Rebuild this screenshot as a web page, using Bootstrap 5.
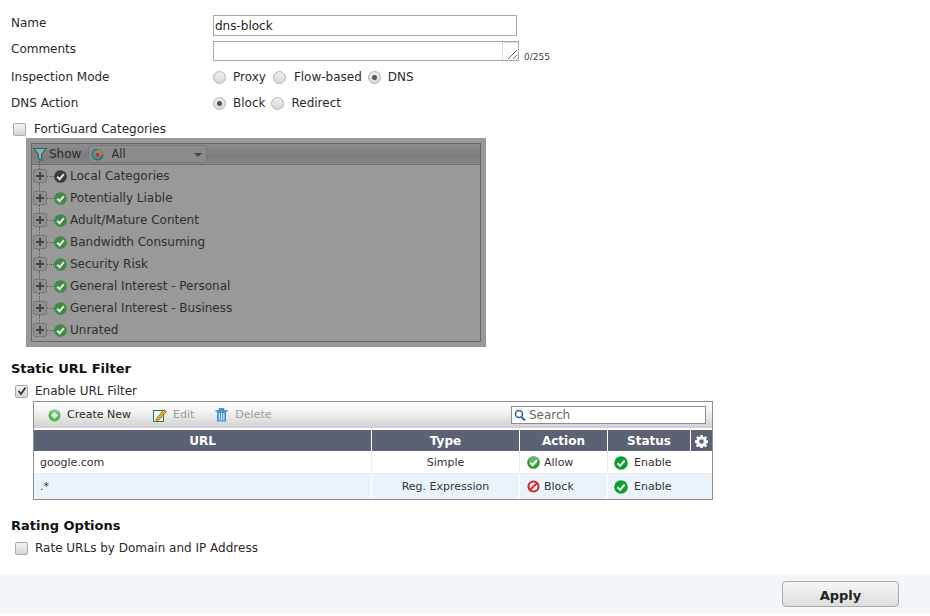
<!DOCTYPE html>
<html lang="en"><head><meta charset="utf-8"><title>DNS filter</title>
<link href="https://cdn.jsdelivr.net/npm/bootstrap@5.3.0/dist/css/bootstrap.min.css" rel="stylesheet">
<style>
html,body{height:616px;overflow:hidden}
body{font-family:"DejaVu Sans",sans-serif;font-size:12px;line-height:16px;color:#2a2a2a;background:#fff}
.pg{height:575px;padding:14px 0 0 11px}
.frow{display:flex;align-items:center}
.flabel{width:202px;flex:none}
.lift3{margin-top:-6px}
.lift2{margin-top:-4px}
.r1{height:23px}
.txt{width:304px;height:21px;border:1px solid #a8a8a8;padding:0 1px;font:inherit;font-size:12px;color:#222;display:block;outline:0}
.area-wrap{position:relative;width:306px;height:20px;border:1px solid #a8a8a8}
.grip{position:absolute;right:0;top:0;width:16px;height:18px;border-left:1px solid #ddd;border-top:1px solid #ddd}
.cnt{font-size:9px;margin-left:5px;color:#444;align-self:flex-end;line-height:12px}
.rad{width:13px;height:13px;border-radius:50%;border:1px solid #b4b4b4;background:linear-gradient(#eee,#d8d8d8);flex:none;display:flex;align-items:center;justify-content:center}
.rad.on::after{content:"";width:5px;height:5px;border-radius:50%;background:#555}
.ropt{margin:0 6px 0 7px}
.ropt.pr{margin-right:7px}
.ropt.fb{margin-left:8px}
.chk{width:11px;height:11px;border:1px solid #aaa;border-radius:2px;background:linear-gradient(#f4f4f4,#d6d6d6);flex:none;box-sizing:content-box;display:flex;align-items:center;justify-content:center}
.gpanel{margin:-4px 0 0 15px;width:460px;height:209px;background:#999;padding:5px}
.gbox{border:1px solid #666;height:199px}
.gbar{height:21px;border-bottom:1px solid #707070;background:linear-gradient(#8d8d8d,#7d7d7d 60%,#858585);display:flex;align-items:center;color:#2c2c2c}
.gfun{margin-left:1px;margin-right:2px}
.gsel{width:119px;height:18px;margin-left:6px;border:1px solid #7a7a7a;border-radius:3px;background:#8c8c8c;display:flex;align-items:center;padding:0 1px;position:relative;font-size:11.5px}
.gsel::after{content:"";position:absolute;right:4px;top:7px;border:4px solid transparent;border-top-color:#444;border-bottom:0}
.gall{margin-left:6px}
.trow{height:22px;display:flex;align-items:center;color:#2f2f2f;position:relative}
.trow::before{content:"";position:absolute;left:7px;top:-4px;height:8px;border-left:1px dotted #555}
.plus{width:14px;height:14px;margin:0 0 0 1px;border:1px solid #777;border-radius:2px;background:#909090;position:relative;flex:none}
.plus::before{content:"";position:absolute;left:2px;right:2px;top:5px;height:2px;background:#444}
.plus::after{content:"";position:absolute;top:2px;bottom:2px;left:5px;width:2px;background:#444}
.dash{width:7px;border-top:1px dotted #555;flex:none}
.trow svg{margin-right:3px;flex:none}
.h6t{font-weight:700;font-size:13px;color:#111;margin:0;line-height:16px}
.lnbox{margin-left:22px;width:680px;height:99px;border:1px solid #8f8f8f}
.lbar{height:26px;background:linear-gradient(#fff,#f2f2f2 40%,#cfcfcf);display:flex;align-items:center;padding-left:14px;font-size:11px;position:relative}
.lbtn{display:flex;align-items:center;gap:6px;margin-right:21px}
.lbtn.first{margin-right:22px}
.lbtn.del{gap:7px}
.dim{color:#9b9b9b}
.srch{position:absolute;left:477px;top:4px;width:195px;height:18px;background:#fff;border:1px solid #8d8d8d;display:flex;align-items:center;padding-left:2px;gap:3px;color:#666;font-size:12px}
.utable{width:678px;border-collapse:separate;border-spacing:0;table-layout:fixed;margin:2px 0 0!important;font-size:11px;--bs-table-bg:transparent}
.utable th{background:#5a6274;color:#fff;height:21px;padding:0;text-align:center;font-size:12px;font-weight:700;border-left:1px solid #fff;border-bottom:0;line-height:18px;vertical-align:middle}
.utable th:first-child{border-left:0}
.utable td{padding:1px 0 0 6px;height:23px;border-bottom:1px solid #eee;border-left:1px solid #eee;color:#333;vertical-align:middle}
.utable td:first-child{border-left:0}
.utable td:last-child{border-left:0}
.utable tr.alt td{background:#eaf3fb;height:25px;border-bottom:0;border-left-color:#fff;padding-top:0}
.utable tr.alt td:first-child,.utable tr.alt td:last-child{border-left:0}
.utable td.cen{text-align:center;padding-left:0}
.utable td.act{padding-left:7px}
.ic{display:inline-flex;align-items:center;gap:4px;vertical-align:middle}
.foot{height:38px;background:#f2f5fa;display:flex;justify-content:flex-end;align-items:center;padding-right:31px}
.apply{width:117px;height:26px;border:1px solid #aaa;border-radius:4px;background:linear-gradient(#f7f7f7,#dcdcdc);font-weight:700;font-size:13px;color:#222;padding:2px 0 0;line-height:24px}
</style></head><body>
<svg width="0" height="0" style="position:absolute"><defs>
<symbol id="ok" viewBox="0 0 14 14"><circle cx="7" cy="7" r="6.800" fill="currentColor"/><path d="M3.500 7.200 6.100 9.900 10.600 4.500" fill="none" stroke="#e4e8e4" stroke-width="2.200"/></symbol>
<symbol id="okg" viewBox="0 0 14 14"><circle cx="7" cy="7" r="6.800" fill="#2a9a33"/><circle cx="7" cy="5" r="5" fill="#8ccf8c" opacity=".55"/><path d="M3.500 7.200 6.100 9.900 10.600 4.500" fill="none" stroke="#fff" stroke-width="2.200"/></symbol>
</defs></svg>
<main class="pg">
 <div class="frow r1"><div class="flabel lift3">Name</div><input class="txt" value="dns-block"></div>
 <div class="frow" style="height:24px;margin-top:2px"><div class="flabel lift2">Comments</div><div class="area-wrap"><div class="grip"><svg width="15" height="17" viewBox="0 0 15 17"><path d="M5 16 14 7M10 16 14 12" stroke="#666" fill="none"/></svg></div></div><span class="cnt">0/255</span></div>
 <div class="frow" style="height:26px;margin-top:1px"><div class="flabel">Inspection Mode</div><span class="rad"></span><span class="ropt pr">Proxy</span><span class="rad"></span><span class="ropt fb">Flow-based</span><span class="rad on"></span><span class="ropt">DNS</span></div>
 <div class="frow" style="height:26px"><div class="flabel">DNS Action</div><span class="rad on"></span><span class="ropt">Block</span><span class="rad"></span><span class="ropt">Redirect</span></div>
 <div class="frow" style="height:26px;padding-left:2px"><span class="chk"></span><span style="margin-left:8px">FortiGuard Categories</span></div>
 <div class="gpanel"><div class="gbox">
  <div class="gbar"><svg class="gfun" width="14" height="15" viewBox="0 0 14 15"><path d="M.8 1.500H13L8.600 7.500V13.500L5.400 11.500V7.500Z" fill="#8fb0b0" stroke="#26666a" stroke-width="1.200"/></svg><span>Show</span>
   <div class="gsel" style="margin-left:7px"><svg width="15" height="15" viewBox="0 0 15 15"><path d="M7.500 2.500A5 5 0 0 0 3.500 10.500" fill="none" stroke="#2e8585" stroke-width="2"/><path d="M7.500 2.500A5 5 0 0 1 12.500 7.500" fill="none" stroke="#a87a2a" stroke-width="2"/><path d="M3.500 10.500A5 5 0 0 0 12.500 7.500" fill="none" stroke="#2a7a66" stroke-width="2"/><circle cx="7.500" cy="8" r="2.200" fill="#b03a3a"/></svg><span class="gall">All</span></div></div>
  <div class="trow"><i class="plus"></i><i class="dash"></i><svg width="13" height="13" style="color:#3c3c3c"><use href="#ok"/></svg><span>Local Categories</span></div>
  <div class="trow"><i class="plus"></i><i class="dash"></i><svg width="13" height="13" style="color:#3d8b45"><use href="#ok"/></svg><span>Potentially Liable</span></div>
  <div class="trow"><i class="plus"></i><i class="dash"></i><svg width="13" height="13" style="color:#3d8b45"><use href="#ok"/></svg><span>Adult/Mature Content</span></div>
  <div class="trow"><i class="plus"></i><i class="dash"></i><svg width="13" height="13" style="color:#3d8b45"><use href="#ok"/></svg><span>Bandwidth Consuming</span></div>
  <div class="trow"><i class="plus"></i><i class="dash"></i><svg width="13" height="13" style="color:#3d8b45"><use href="#ok"/></svg><span>Security Risk</span></div>
  <div class="trow"><i class="plus"></i><i class="dash"></i><svg width="13" height="13" style="color:#3d8b45"><use href="#ok"/></svg><span>General Interest - Personal</span></div>
  <div class="trow"><i class="plus"></i><i class="dash"></i><svg width="13" height="13" style="color:#3d8b45"><use href="#ok"/></svg><span>General Interest - Business</span></div>
  <div class="trow"><i class="plus"></i><i class="dash"></i><svg width="13" height="13" style="color:#3d8b45"><use href="#ok"/></svg><span>Unrated</span></div>
 </div></div>
 <h2 class="h6t" style="margin-top:14px">Static URL Filter</h2>
 <div class="frow" style="height:20px;margin-top:4px;padding-left:4px"><span class="chk"><svg width="10" height="10" viewBox="0 0 10 10"><path d="M1.500 5 4 8 8.500 1.500" fill="none" stroke="#333" stroke-width="1.800"/></svg></span><span style="margin-left:7px">Enable URL Filter</span></div>
 <div class="lnbox">
  <div class="lbar">
   <div class="lbtn first"><svg width="13" height="13" viewBox="0 0 13 13"><circle cx="6.500" cy="6.500" r="6" fill="#55b455"/><circle cx="6.500" cy="4.500" r="4" fill="#a5dca5" opacity=".5"/><path d="M6.500 3.500v6M3.500 6.500h6" stroke="#fff" stroke-width="2"/></svg>Create New</div>
   <div class="lbtn dim"><svg width="14" height="14" viewBox="0 0 14 14"><rect x=".5" y="2.500" width="10" height="11" fill="#f4fbf4" stroke="#1f7a66"/><path d="M3.500 10.500 11 1.500 13.500 3.500 6 12 3 12.500Z" fill="#e8a62c" stroke="#7a5a14" stroke-width=".7"/></svg>Edit</div>
   <div class="lbtn del dim"><svg width="13" height="14" viewBox="0 0 13 14"><path d="M.5 3h12M4.500 3V1h4v2" stroke="#2f78c0" fill="none" stroke-width="1.300"/><path d="M2 4h9v9.500H2z" fill="#3f8fd6"/><path d="M4.200 5v7.500M6.500 5v7.500M8.800 5v7.500" stroke="#e6f1fb" stroke-width="1.100"/></svg>Delete</div>
   <div class="srch"><svg width="12" height="13" viewBox="0 0 12 13"><circle cx="5" cy="5" r="3.500" fill="#fff" stroke="#3c5f9c" stroke-width="1.600"/><path d="M7.500 8 11 11.500" stroke="#3c5f9c" stroke-width="2"/></svg>Search</div>
  </div>
  <table class="table utable">
   <colgroup><col style="width:337px"><col style="width:148px"><col style="width:88px"><col style="width:83px"><col style="width:22px"></colgroup>
   <thead><tr><th>URL</th><th>Type</th><th>Action</th><th>Status</th><th><svg width="13" height="13" viewBox="0 0 16 16"><path fill="#fff" fill-rule="evenodd" d="M6.600 0h2.800l.4 2.200 1.200.5 1.900-1.300 2 2-1.300 1.900.5 1.200 2.200.4v2.800l-2.200.4-.5 1.200 1.300 1.900-2 2-1.900-1.300-1.200.5-.4 2.200H6.600l-.4-2.200-1.200-.5-1.900 1.300-2-2 1.300-1.900-.5-1.200L0 9.400V6.600l2.200-.4.5-1.200L1.400 3.100l2-2 1.900 1.300 1.200-.5zM8 5.200a2.800 2.800 0 1 0 0 5.600 2.800 2.800 0 0 0 0-5.600z"/></svg></th></tr></thead>
   <tbody>
    <tr><td>google.com</td><td class="cen">Simple</td><td class="act"><span class="ic"><svg width="13" height="13"><use href="#okg"/></svg>Allow</span></td><td><span class="ic" style="gap:6px"><svg width="14" height="14" style="color:#0f9d2c"><use href="#ok"/></svg>Enable</span></td><td></td></tr>
    <tr class="alt"><td>.*</td><td class="cen">Reg. Expression</td><td class="act"><span class="ic"><svg width="13" height="13" viewBox="0 0 13 13"><circle cx="6.500" cy="6.500" r="5" fill="#fff" stroke="#d9272e" stroke-width="2.200"/><path d="M3 10 10 3" stroke="#d9272e" stroke-width="2"/></svg>Block</span></td><td><span class="ic" style="gap:6px"><svg width="14" height="14" style="color:#0f9d2c"><use href="#ok"/></svg>Enable</span></td><td></td></tr>
   </tbody>
  </table>
 </div>
 <h2 class="h6t" style="margin-top:18px">Rating Options</h2>
 <div class="frow" style="height:22px;margin-top:3px;padding-left:4px"><span class="chk"></span><span style="margin-left:7px">Rate URLs by Domain and IP Address</span></div>
</main>
<footer class="foot"><button class="btn apply" type="button">Apply</button></footer>
</body></html>
